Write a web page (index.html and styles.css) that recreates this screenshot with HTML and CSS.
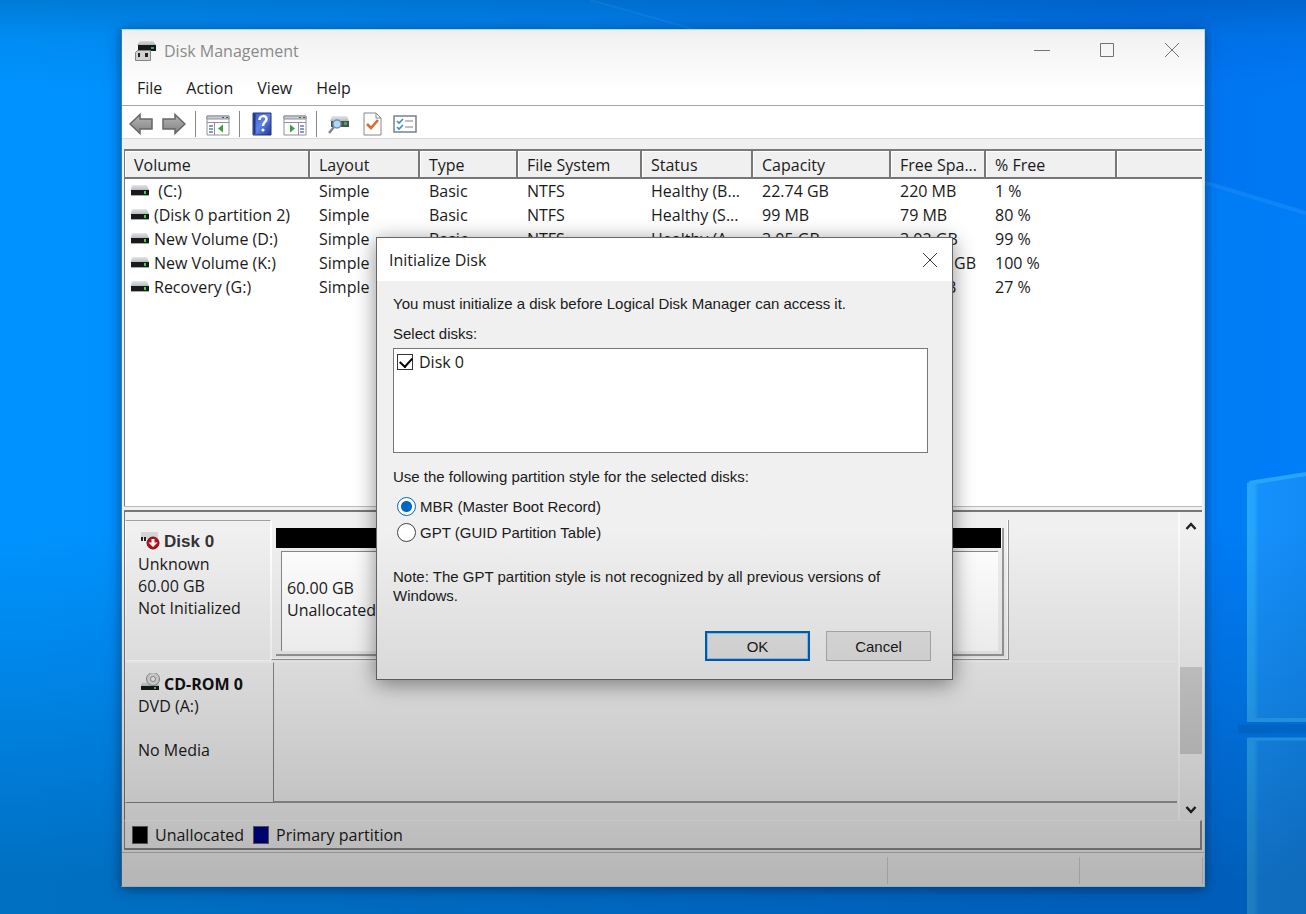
FILE: index.html
```html
<!DOCTYPE html>
<html lang="en">
<head>
<meta charset="utf-8">
<title>Disk Management</title>
<link rel="stylesheet" href="styles.css">
</head>
<body>
<svg class="defs" aria-hidden="true">
  <defs>
    <linearGradient id="metal" x1="0" y1="0" x2="0" y2="1"><stop offset="0" stop-color="#e4e6e8"/><stop offset="1" stop-color="#b9bcbf"/></linearGradient>
    <linearGradient id="arrow" x1="0" y1="0" x2="0" y2="1"><stop offset="0" stop-color="#b5b5b5"/><stop offset="1" stop-color="#838383"/></linearGradient>
    <linearGradient id="book" x1="0" y1="0" x2="1" y2="1"><stop offset="0" stop-color="#3a5bc8"/><stop offset=".5" stop-color="#5f83e6"/><stop offset="1" stop-color="#1c339b"/></linearGradient>
    <linearGradient id="pane" x1="0" y1="0" x2="1" y2="0"><stop offset="0" stop-color="#28a8fa"/><stop offset=".12" stop-color="#24a4fa"/><stop offset=".2" stop-color="#1690fb"/><stop offset="1" stop-color="#128bf5"/></linearGradient>
    <symbol id="drive" viewBox="0 0 20 12">
      <path d="M2 0h15l2 5H1z" fill="url(#metal)"/>
      <rect x="1" y="5" width="18" height="5" fill="#17191a"/>
      <path d="M1 10.500h18" stroke="#aaa"/>
      <rect x="14" y="6" width="2" height="3" fill="#37d34a"/>
    </symbol>
  </defs>
</svg>
<div class="desktop">
  <svg class="wallpaper" viewBox="0 0 1306 914" preserveAspectRatio="none" aria-hidden="true">
    <path d="M585 0L1306 214V914H0V0z" fill="#0090ff" opacity=".25"/>
    <path d="M1190 178l116 35" stroke="#2d9dff" stroke-width="4" opacity=".35"/>
    <path d="M590 0l110 31" stroke="#2d9dff" stroke-width="2" opacity=".35"/>
    <path d="M1247 483l59-10v249h-59z" fill="url(#pane)"/>
    <path d="M1249 483l57-9M1247 720h59" stroke="#28a4fc" stroke-width="4" fill="none"/>
    <path d="M1238 729h68" stroke="#0064c8" stroke-width="9" opacity=".4"/>
    <path d="M1247 738h59v176h-59z" fill="url(#pane)"/>
    <path d="M1248 739h58" stroke="#28a4fc" stroke-width="3"/>
  </svg>

  <main class="window">
    <header class="titlebar">
      <svg class="app-icon" viewBox="0 0 24 24" aria-hidden="true">
        <path d="M7 2h13l3 4H4z" fill="url(#metal)"/>
        <rect x="5" y="6" width="18" height="6" fill="#17191a"/><rect x="18" y="8" width="3" height="2" fill="#37b34a"/>
        <path d="M4.500 11.500h13v10h-15v-8z" fill="#d8d8d8" stroke="#888"/>
        <rect x="5" y="14" width="2" height="4" fill="#222"/><rect x="12" y="14" width="3" height="4" fill="#222"/>
      </svg>
      <h1 class="title">Disk Management</h1>
      <div class="caption-buttons">
        <button class="caption" aria-label="Minimize"><svg viewBox="0 0 16 16"><path d="M0 8.500h16"/></svg></button>
        <button class="caption" aria-label="Maximize"><svg viewBox="0 0 16 16"><path d="M1.500 1.500h13v13h-13z"/></svg></button>
        <button class="caption" aria-label="Close"><svg viewBox="0 0 16 16"><path d="M1 1l14 14M15 1L1 15"/></svg></button>
      </div>
    </header>
    <nav class="menu">
      <button>File</button><button>Action</button><button>View</button><button>Help</button>
    </nav>
    <div class="toolbar">
      <button class="tool" aria-label="Back"><svg viewBox="0 0 24 24"><path d="M1 12L11 2.500V7h12v10H11v4.500z" fill="url(#arrow)" stroke="#666" stroke-width="1.500"/></svg></button>
      <button class="tool" aria-label="Forward"><svg viewBox="0 0 24 24"><path d="M23 12L13 2.500V7H1v10h12v4.500z" fill="url(#arrow)" stroke="#666" stroke-width="1.500"/></svg></button>
      <span class="sep"></span>
      <button class="tool" aria-label="Show or hide console tree"><svg viewBox="0 0 24 24"><path d="M1 4h22v19H1z" fill="#fff" stroke="#8a919b"/><path d="M1 4h22v3H1z" fill="#c8ccd4" stroke="#8a919b"/><path d="M1 10.500h22M8.500 11v12" stroke="#8a919b"/><path d="M16 5.500h2M20 5.500h2" stroke="#556"/><path d="M3 14h4M3 17h4M3 20h4" stroke="#5a7dbb" stroke-width="1.500"/><path d="M17 12.500v8L12 16.500z" fill="#3c9f3c"/></svg></button>
      <span class="sep"></span>
      <button class="tool" aria-label="Help"><svg viewBox="0 0 24 24"><path d="M3 1h18v22H3z" fill="url(#book)" stroke="#20357f"/><path d="M4.500 2v20" stroke="#20357f" stroke-width="2"/><path d="M9.500 8c0-5 7-5 7-1 0 3-3.500 3-3.500 7" fill="none" stroke="#fff" stroke-width="2.500"/><circle cx="13" cy="18" r="1.600" fill="#fff"/></svg></button>
      <button class="tool" aria-label="Show or hide action pane"><svg viewBox="0 0 24 24"><path d="M1 4h22v19H1z" fill="#fff" stroke="#8a919b"/><path d="M1 4h22v3H1z" fill="#c8ccd4" stroke="#8a919b"/><path d="M1 10.500h22M15.500 11v12" stroke="#8a919b"/><path d="M16 5.500h2M20 5.500h2" stroke="#556"/><path d="M17 14h4M17 17h4M17 20h4" stroke="#5a7dbb" stroke-width="1.500"/><path d="M7 12.500v8l5-4z" fill="#3c9f3c"/></svg></button>
      <span class="sep"></span>
      <button class="tool" aria-label="Rescan disks"><svg viewBox="0 0 24 24"><path d="M5 4h15l2 5H3z" fill="url(#metal)"/><rect x="4" y="9" width="18" height="6" fill="#4a5055"/><rect x="17" y="10" width="3" height="3" fill="#37b34a"/><circle cx="10" cy="12" r="4" fill="#b4d8f4" stroke="#6d92b5" stroke-width="1.500"/><path d="M7 15l-5 6" stroke="#7d8790" stroke-width="2.500"/></svg></button>
      <button class="tool" aria-label="Properties"><svg viewBox="0 0 24 24"><path d="M4 1h12l5 5v17H4z" fill="#fff" stroke="#888"/><path d="M16 1v5h5" fill="none" stroke="#888"/><path d="M7 12l4 4 7-8" fill="none" stroke="#e3682c" stroke-width="2.600"/></svg></button>
      <button class="tool" aria-label="Options"><svg viewBox="0 0 24 24"><path d="M1 4h22v16H1z" fill="#fff" stroke="#77818c" stroke-width="1.500"/><path d="M4 9l2 2 4-4M4 15l2 2 4-4" fill="none" stroke="#3e8bd0" stroke-width="1.600"/><path d="M12 9h8M12 15h8" stroke="#aaa" stroke-width="1.500"/></svg></button>
    </div>

    <section class="volumes">
      <table class="volume-table">
        <colgroup><col class="c-volume"><col class="c-layout"><col class="c-type"><col class="c-fs"><col class="c-status"><col class="c-capacity"><col class="c-free"><col class="c-percent"><col></colgroup>
        <thead><tr><th>Volume</th><th>Layout</th><th>Type</th><th>File System</th><th>Status</th><th>Capacity</th><th>Free Spa...</th><th>% Free</th><th></th></tr></thead>
        <tbody>
          <tr><td><svg class="drive"><use href="#drive"/></svg>&nbsp;(C:)</td><td>Simple</td><td>Basic</td><td>NTFS</td><td>Healthy (B...</td><td>22.74 GB</td><td>220 MB</td><td>1 %</td><td></td></tr>
          <tr><td><svg class="drive"><use href="#drive"/></svg>(Disk 0 partition 2)</td><td>Simple</td><td>Basic</td><td>NTFS</td><td>Healthy (S...</td><td>99 MB</td><td>79 MB</td><td>80 %</td><td></td></tr>
          <tr><td><svg class="drive"><use href="#drive"/></svg>New Volume (D:)</td><td>Simple</td><td>Basic</td><td>NTFS</td><td>Healthy (A...</td><td>3.05 GB</td><td>3.02 GB</td><td>99 %</td><td></td></tr>
          <tr><td><svg class="drive"><use href="#drive"/></svg>New Volume (K:)</td><td>Simple</td><td>Basic</td><td>NTFS</td><td>Healthy (P...</td><td>100.23 GB</td><td>100.12 GB</td><td>100 %</td><td></td></tr>
          <tr><td><svg class="drive"><use href="#drive"/></svg>Recovery (G:)</td><td>Simple</td><td>Basic</td><td>NTFS</td><td>Healthy (O...</td><td>499 MB</td><td>135 MB</td><td>27 %</td><td></td></tr>
        </tbody>
      </table>
    </section>

    <section class="disks">
      <div class="disk-list">
        <div class="disk">
          <div class="disk-label">
            <h2 class="disk-name disk-name-flag"><svg class="disk-icon" viewBox="0 0 24 22" aria-hidden="true"><path d="M3 1h17v7H3z" fill="#d5d5d5"/><path d="M3 6h2v4H3zM6 6h2v4H6z" fill="#222"/><circle cx="15" cy="12" r="6" fill="#b5121b" stroke="#7e0b11"/><path d="M13.500 8h3v3.500h3L15 16l-4.500-4.500h3z" fill="#fff"/></svg>Disk 0</h2>
            <p>Unknown</p><p>60.00 GB</p><p>Not Initialized</p>
          </div>
          <div class="disk-map">
            <div class="partition">
              <div class="partition-bar"></div>
              <div class="partition-body"><p>60.00 GB</p><p>Unallocated</p></div>
            </div>
          </div>
        </div>
        <div class="disk disk-empty">
          <div class="disk-label">
            <h2 class="disk-name"><svg class="disk-icon" viewBox="0 0 24 22" aria-hidden="true"><path d="M4 9h16l1 4H3z" fill="url(#metal)"/><circle cx="15" cy="6" r="6.500" fill="#d9d9d9" stroke="#8e8e8e"/><circle cx="15" cy="6" r="2.500" fill="#f4f4f4" stroke="#8e8e8e"/><rect x="3" y="13" width="18" height="4" fill="#17191a"/><rect x="16" y="14" width="2" height="2" fill="#37d34a"/></svg>CD-ROM 0</h2>
            <p>DVD (A:)</p><p>&nbsp;</p><p>No Media</p>
          </div>
          <div class="disk-blank"></div>
        </div>
      </div>
      <div class="scrollbar">
        <button class="scroll-arrow" aria-label="Scroll up"><svg viewBox="0 0 12 10"><path d="M1.500 8L6 3l4.500 5"/></svg></button>
        <div class="scroll-track"><div class="scroll-thumb"></div></div>
        <button class="scroll-arrow scroll-down" aria-label="Scroll down"><svg viewBox="0 0 12 10"><path d="M1.500 2L6 7l4.500-5"/></svg></button>
      </div>
    </section>
    <div class="legend">
      <span class="swatch swatch-unallocated"></span><span>Unallocated</span>
      <span class="swatch swatch-primary"></span><span>Primary partition</span>
    </div>
    <footer class="statusbar"><span></span><span></span><span></span></footer>

    <form class="dialog" role="dialog" aria-labelledby="dialog-title">
      <header class="dialog-title">
        <h2 id="dialog-title">Initialize Disk</h2>
        <button type="button" class="dialog-close" aria-label="Close"><svg viewBox="0 0 16 16"><path d="M1 1l14 14M15 1L1 15"/></svg></button>
      </header>
      <div class="dialog-body">
        <p>You must initialize a disk before Logical Disk Manager can access it.</p>
        <p class="list-caption">Select disks:</p>
        <div class="listbox">
          <label class="check"><input type="checkbox" checked>Disk 0</label>
        </div>
        <fieldset class="styles">
          <legend>Use the following partition style for the selected disks:</legend>
          <label class="radio"><input type="radio" name="style" checked>MBR (Master Boot Record)</label>
          <label class="radio"><input type="radio" name="style">GPT (GUID Partition Table)</label>
        </fieldset>
        <p class="note">Note: The GPT partition style is not recognized by all previous versions of Windows.</p>
        <div class="actions">
          <button type="button" class="btn btn-default">OK</button>
          <button type="button" class="btn">Cancel</button>
        </div>
      </div>
    </form>
  </main>
</div>
</body>
</html>
```

FILE: styles.css
```css
* { box-sizing: border-box; }
body { margin: 0; font: 16px/22px "Open Sans", "Noto Sans", sans-serif; color: #1a1a1a; }
h1, h2, p { margin: 0; font-size: inherit; font-weight: 400; }
button { font: inherit; color: inherit; background: none; border: 0; padding: 0; }
.defs { position: absolute; width: 0; height: 0; }

.desktop {
  position: relative;
  display: flex;
  min-height: 100vh;
  padding: 29px 101px 27px 121px;
  background: linear-gradient(90deg, #0095ff, #0074f0 88%, #0078f4);
}
/* shading that falls over the whole screen */
.desktop::after {
  content: "";
  position: absolute;
  inset: 0;
  pointer-events: none;
  background: linear-gradient(rgba(0,0,0,.16), rgba(0,0,0,.05) 4%, rgba(0,0,0,0) 10%, rgba(0,0,0,0) 58%, rgba(0,0,0,.1) 75%, rgba(0,0,0,.24) 96%, rgba(0,0,0,.24));
}
.wallpaper { position: absolute; inset: 0; width: 100%; height: 100%; }

.window {
  position: relative;
  display: flex;
  flex: 1;
  flex-direction: column;
  min-width: 0;
  background: #f0f0f0;
  border: 1px solid #bfe6f5;
  border-left-color: #4a7c9c;
  box-shadow: 0 2px 12px rgba(0,20,60,.5);
}
.titlebar { display: flex; align-items: center; height: 43px; padding: 0 0 2px 11px; background: #fff; }
.app-icon { width: 24px; height: 24px; margin-right: 7px; }
.title { flex: 1; color: #8f8f8f; }
.caption-buttons { display: flex; }
.caption { width: 65px; height: 36px; padding-bottom: 2px; }
.caption svg, .dialog-close svg { display: block; width: 16px; height: 16px; margin: auto; fill: none; stroke: #777; }
.menu { display: flex; gap: 24px; height: 33px; padding: 0 15px; background: #fff; border-bottom: 1px solid #a5a5a5; }
.menu button { height: 30px; }
.toolbar { display: flex; align-items: center; gap: 9px; height: 33px; padding: 3px 7px 0; background: #fff; border-bottom: 1px solid #d9d9d9; }
.tool, .tool svg { display: block; width: 24px; height: 24px; }
.sep { width: 1px; height: 26px; margin-right: 1px; background: #888; }

.volumes { flex: 1; margin: 10px 2px 0; background: #fff; border: solid #7a7a7a; border-width: 2px 0 0 1px; }
.volume-table { width: 100%; border-collapse: separate; border-spacing: 0; table-layout: fixed; white-space: nowrap; }
.volume-table th { height: 28px; padding: 1px 0 0 9px; overflow: hidden; text-align: left; font-weight: 400; background: #f0f0f0; border: solid #777; border-width: 0 2px 2px 0; box-shadow: inset 1px 1px #fff; }
.volume-table th:last-child { border-right: 0; }
.volume-table td { height: 24px; padding: 0 0 0 9px; overflow: hidden; line-height: 24px; }
.volume-table td:first-child { padding-left: 5px; }
.drive { width: 20px; height: 12px; margin-right: 4px; }
.c-volume { width: 185px; }
.c-layout { width: 110px; }
.c-type { width: 98px; }
.c-fs { width: 124px; }
.c-status { width: 111px; }
.c-capacity { width: 138px; }
.c-free { width: 95px; }
.c-percent { width: 131px; }

.disks { display: flex; margin: 0 2px; border: solid #777; border-width: 2px 0 0 1px; box-shadow: 0 -3px #f0f0f0, 0 -4px #bbb; }
.disk-list { flex: 1; padding: 8px 1px 17px 0; }
.disk { display: flex; }
.disk-label { width: 146px; height: 141px; padding: 10px 12px; border: 1px solid #fff; border-top-color: #a0a0a0; }
.disk-name { display: flex; align-items: center; height: 22px; color: #111; font-weight: 700; }
.disk-name-flag { color: #333; font-family: "Liberation Sans", sans-serif; font-size: 17px; }
.disk-icon { width: 24px; height: 22px; margin-right: 2px; }
.disk-map { width: 738px; height: 140px; padding: 8px 4px 3px 4px; border: solid #999; border-width: 0 1px 1px 1px; border-left-color: #fff; box-shadow: inset -1px -1px #fff; }
.partition { display: flex; flex-direction: column; height: 100%; border: solid #999; border-width: 0 2px 2px 0; }
.partition-bar { height: 20px; background: #000; border-right: 1px solid #fff; }
.partition-body { flex: 1; margin: 3px 4px 3px 5px; padding: 25px 5px 0; background: #fff; border: solid #888; border-width: 1px 0 0 1px; }
.disk-empty { border-top: 1px solid #f7f7f7; }
.disk-empty .disk-label { width: 149px; border-color: #f7f7f7 #888 #888 #f7f7f7; }
.disk-blank { flex: 1; border-bottom: 2px solid #999; }

.scrollbar { display: flex; flex-direction: column; width: 24px; border-left: 2px solid #fafafa; }
.scroll-arrow { height: 28px; }
.scroll-down { padding-top: 8px; }
.scroll-arrow svg { display: block; width: 12px; height: 10px; margin: auto; fill: none; stroke: #222; stroke-width: 2.5; }
.scroll-track { display: flex; flex: 1; flex-direction: column; justify-content: flex-end; padding-bottom: 38px; }
.scroll-thumb { height: 87px; background: #cdcdcd; }

.legend { display: flex; align-items: center; height: 30px; margin: 0 2px; padding: 1px 0 0 7px; border: solid #8b8b8b; border-width: 1px 2px 2px 1px; border-top-color: #f7f7f7; }
.swatch { width: 16px; height: 18px; margin-right: 7px; border: 1px solid #666; }
.swatch-unallocated { background: #000; }
.swatch-primary { margin-left: 9px; background: #00008b; }
.statusbar { display: flex; height: 34px; margin-top: 2px; padding: 4px 1px 2px 0; border-top: 1px solid #bdbdbd; }
.statusbar span { width: 192px; border-right: 1px solid #d0d0d0; }
.statusbar span:first-child { flex: 1; }
.statusbar span:last-child { width: 123px; }

.dialog {
  position: absolute;
  top: 207px;
  left: 254px;
  width: 577px;
  background: #f0f0f0;
  border: 1px solid #666;
  box-shadow: 0 4px 20px rgba(0,0,0,.45);
}
.dialog-title { display: flex; align-items: center; justify-content: space-between; height: 43px; padding: 0 14px 0 12px; background: #fff; }
.dialog-close svg { stroke: #333; }
.dialog-body { padding: 13px 21px 18px 16px; font: 15px/19px "Liberation Sans", Arial, sans-serif; }
.list-caption { margin-top: 11px; }
.listbox { height: 105px; margin: 5px 3px 0 0; padding: 2px 3px; background: #fff; border: 1px solid #777; }
.check { display: flex; align-items: center; gap: 6px; height: 22px; font: 16px/22px "Open Sans", sans-serif; }
.check input { appearance: none; width: 16px; height: 16px; margin: 0; border: 1px solid #333; background: #fff; }
.check input:checked::before { content: ""; display: block; width: 6px; height: 10px; margin: 0 4px; border: solid #000; border-width: 0 2px 2px 0; transform: rotate(42deg); }
.styles { margin: 14px 0 0; padding: 0; border: 0; }
.styles legend { padding: 0; margin-bottom: 7px; }
.radio { display: flex; align-items: center; gap: 4px; height: 26px; padding-left: 4px; }
.radio input { appearance: none; width: 19px; height: 19px; margin: 0; background: #fff; border: 1px solid #444; border-radius: 50%; }
.radio input:checked { background: radial-gradient(circle, #0067c0 5px, #fff 6px); border-color: #0067c0; }
.note { margin-top: 22px; }
.actions { display: flex; justify-content: flex-end; gap: 16px; margin-top: 26px; }
.btn { width: 105px; height: 30px; background: #e1e1e1; border: 1px solid #adadad; }
.btn-default { border: 2px solid #0060b8; box-shadow: inset 0 0 0 1px #8fc6f0; }
```
